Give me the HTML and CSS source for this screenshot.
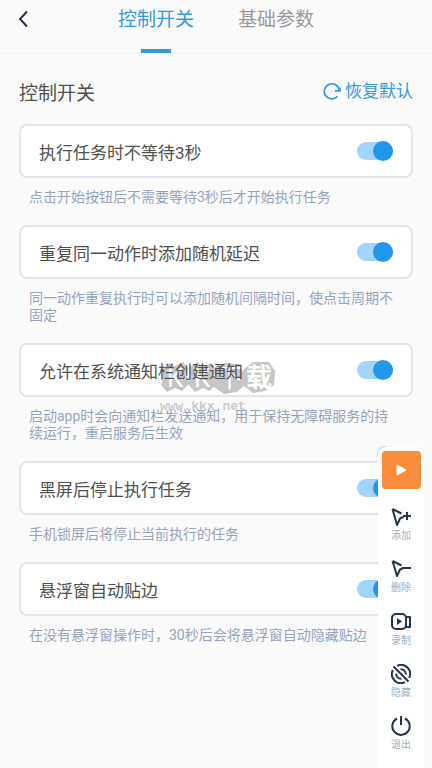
FILE: index.html
```html
<!DOCTYPE html>
<html lang="zh-CN">
<head>
<meta charset="utf-8">
<meta name="viewport" content="width=device-width, initial-scale=1">
<title>控制开关</title>
<link rel="stylesheet" href="styles.css">
</head>
<body>
<header class="topbar">
  <button class="back" type="button" aria-label="返回">
    <svg width="12" height="18" viewBox="0 0 12 18"><path d="M9 1.500 2 9l7 7.500" fill="none" stroke="currentColor" stroke-width="2"/></svg>
  </button>
  <nav class="tabs">
    <a class="tab active" href="#switches">控制开关</a>
    <a class="tab" href="#params">基础参数</a>
  </nav>
</header>

<main class="content" id="switches">
  <div class="heading">
    <h1>控制开关</h1>
    <button class="reset" type="button">
      <svg width="18" height="18" viewBox="0 0 18 18"><path d="M14.500 14.200A7.500 7.500 0 1 1 16.300 8.800M12 8.800h5V5.500" fill="none" stroke="currentColor" stroke-width="1.700"/></svg>
      <span>恢复默认</span>
    </button>
  </div>

  <section class="setting">
    <label class="card"><span>执行任务时不等待3秒</span><input class="switch" type="checkbox" checked></label>
    <p class="hint">点击开始按钮后不需要等待3秒后才开始执行任务</p>
  </section>
  <section class="setting">
    <label class="card"><span>重复同一动作时添加随机延迟</span><input class="switch" type="checkbox" checked></label>
    <p class="hint">同一动作重复执行时可以添加随机间隔时间，使点击周期不固定</p>
  </section>
  <section class="setting">
    <label class="card"><span>允许在系统通知栏创建通知</span><input class="switch" type="checkbox" checked></label>
    <p class="hint">启动app时会向通知栏发送通知，用于保持无障碍服务的持续运行，重启服务后生效</p>
    <div class="watermark">
      <svg width="116" height="34" viewBox="0 0 116 34">
        <path class="blob" d="M2 10 9 3l6 3 8-4 5 7-3 5 5 9-8 8-7-3-8 4-6-7 2-6zM29 8l8-6 6 5 8-4 5 8-4 5 5 8-8 7-6-3-8 4-7-8 3-7zM55 7l10-4 14 1 4 8 3 12-9 8-13 2-10-7zM83 10l10-8 16 0 6 9-1 14-9 6-12 2-9-7z"/>
        <text class="mark thin" x="7" y="27">K</text>
        <text class="mark thin" x="34" y="27">K</text>
        <text class="mark thin" x="57" y="27">下</text>
        <text class="mark" x="86" y="27">载</text>
      </svg>
      <span>www.kkx.net</span>
    </div>
  </section>
  <section class="setting">
    <label class="card"><span>黑屏后停止执行任务</span><input class="switch" type="checkbox" checked></label>
    <p class="hint">手机锁屏后将停止当前执行的任务</p>
  </section>
  <section class="setting">
    <label class="card"><span>悬浮窗自动贴边</span><input class="switch" type="checkbox" checked></label>
    <p class="hint">在没有悬浮窗操作时，30秒后会将悬浮窗自动隐藏贴边</p>
  </section>
</main>

<aside class="floating" aria-label="悬浮窗">
  <button class="play" type="button" aria-label="开始">
    <svg width="11" height="12" viewBox="0 0 11 12"><path d="M1 1v10l9-5z" fill="#fff" stroke="#fff" stroke-linejoin="round"/></svg>
  </button>
  <button class="tool" type="button">
    <svg viewBox="0 0 20 20"><path d="M1.500 2l4.500 16 3-6.500 3.500-1.500M1.500 2l9 4.500M12 9h8M16 5v8"/></svg>
    <span>添加</span>
  </button>
  <button class="tool" type="button">
    <svg viewBox="0 0 20 20"><path d="M1.500 2l4.500 15 3-6.500 3.500-1.500M1.500 2l9 4.500M11 9h9"/></svg>
    <span>删除</span>
  </button>
  <button class="tool" type="button">
    <svg viewBox="0 0 20 20"><rect x="1" y="2" width="14" height="15" rx="4"/><path d="M15 5h4v10h-4"/><path class="solid" d="M6 6v7l5-3.500z"/></svg>
    <span>录制</span>
  </button>
  <button class="tool" type="button">
    <svg viewBox="0 0 20 20"><path d="M2.500 2.500l15 15M6 1.900A9 9 0 0 1 18.100 14M14 18.100A9 9 0 0 1 1.900 6M9.500 5.200A5 5 0 0 1 14.800 10.500M10.500 14.800A5 5 0 0 1 5.200 9.500"/></svg>
    <span>隐藏</span>
  </button>
  <button class="tool" type="button">
    <svg viewBox="0 0 20 20"><path d="M6 2.500a8.700 8.700 0 1 0 8 0M10 0v9"/></svg>
    <span>退出</span>
  </button>
</aside>
</body>
</html>
```
FILE: styles.css
```css
* { box-sizing: border-box; }
body {
  margin: 0;
  min-height: 100vh;
  background: #fafafb;
  color: #505050;
  font-family: Roboto, "Noto Sans CJK SC", sans-serif;
}
button { border: 0; padding: 0; background: none; font: inherit; color: inherit; cursor: pointer; }
svg { display: block; }
.topbar {
  position: relative;
  display: flex;
  justify-content: center;
  height: 54px;
  border-bottom: 1px solid #f3f3f4;
}
.back { position: absolute; left: 18px; top: 10px; color: #26334a; }
.tabs { display: flex; gap: 44px; }
.tab {
  display: flex;
  flex-direction: column;
  justify-content: space-between;
  align-items: center;
  padding-top: 6px;
  font-size: 19px;
  line-height: 28px;
  color: #999;
  text-decoration: none;
}
.tab.active { color: #3498df; }
.tab.active::after { content: ""; width: 30px; height: 4px; background: #3498df; }
.content { padding: 24px 19px; }
.heading { display: flex; justify-content: space-between; align-items: flex-start; height: 46px; }
h1 { margin: 0; font-size: 19px; line-height: 32px; font-weight: 400; }
.reset { display: flex; align-items: center; gap: 4px; font-size: 17px; line-height: 26px; color: #3498df; }
.setting { position: relative; margin-bottom: 19px; }
.card {
  display: flex;
  justify-content: space-between;
  align-items: center;
  height: 54px;
  padding: 0 18px;
  border: 2px solid #e3e5ea;
  border-radius: 8px;
  background: #fff;
  font-size: 17px;
}
.card span { position: relative; z-index: 1; }
.switch {
  appearance: none;
  display: flex;
  align-items: center;
  justify-content: flex-end;
  width: 36px;
  height: 18px;
  margin: 0;
  border-radius: 9px;
  background: #a3d5fa;
}
.switch::before { content: ""; flex: none; width: 20px; height: 20px; border-radius: 50%; background: #2196eb; }
.switch:not(:checked) { justify-content: flex-start; background: #ddd; }
.hint { margin: 0; padding: 11px 14px 0 10px; font-size: 14px; line-height: 17px; color: #98a4bd; }
.watermark { position: absolute; left: 141px; top: 17px; opacity: .75; pointer-events: none; }
.watermark span { display: block; margin-top: 6px; font: bold 13px/14px "Liberation Mono", monospace; color: #bbb; }
.blob { fill: #b4b4b4; }
.mark { fill: #fff; font-size: 26px; font-weight: 700; }
.thin { font-weight: 400; }
.floating {
  position: fixed;
  right: 8px;
  bottom: 0;
  z-index: 2;
  display: flex;
  flex-direction: column;
  align-items: center;
  width: 46px;
  height: 321px;
  padding-top: 4px;
  border-radius: 8px 8px 0 0;
  background: #fff;
}
.floating::before {
  content: "";
  position: absolute;
  left: -1px;
  top: -1px;
  width: 8px;
  height: 10px;
  border: solid #bfdcef;
  border-width: 1px 0 0 1px;
  border-radius: 8px 0 0;
}
.play {
  display: flex;
  align-items: center;
  justify-content: center;
  width: 39px;
  height: 39px;
  margin-bottom: 18px;
  border-radius: 4px;
  background: #fb8c3c;
}
.tool {
  display: flex;
  flex-direction: column;
  align-items: center;
  gap: 2px;
  height: 53px;
  font-size: 10px;
  line-height: 14px;
  color: #a3aebd;
}
.tool svg { width: 20px; height: 20px; fill: none; stroke: #26334a; stroke-width: 2; stroke-linejoin: round; }
.tool .solid { fill: #26334a; stroke: none; }
```
